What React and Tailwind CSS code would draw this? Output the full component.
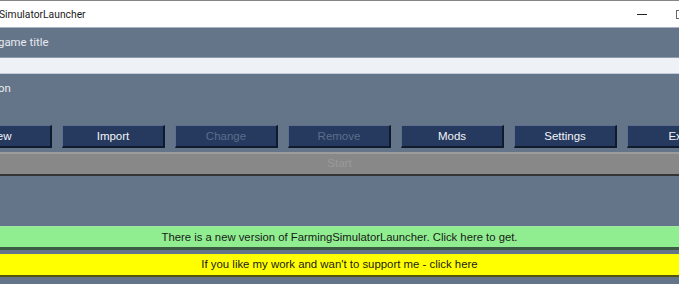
export default function App() {
  const buttons = [
    { label: "New", disabled: false },
    { label: "Import", disabled: false },
    { label: "Change", disabled: true },
    { label: "Remove", disabled: true },
    { label: "Mods", disabled: false },
    { label: "Settings", disabled: false },
    { label: "Exit", disabled: false },
  ];
  return (
    <div className="w-[679px] h-[284px] overflow-hidden bg-[#657589] flex flex-col" style={{ fontFamily: '"Liberation Sans", Arial, sans-serif' }}>
      <div className="h-px bg-[#858585] shrink-0" />
      <div className="h-[27px] shrink-0 bg-white border-b border-[#a7b3c3] flex items-center justify-between">
        <span className="-ml-px pt-px text-[10.3px] text-[#1b1b1b]" style={{ fontFamily: 'Roboto, "Noto Sans", sans-serif' }}>SimulatorLauncher</span>
        <div className="flex items-center h-full">
          <div className="w-[10px] h-px bg-[#222] mr-[29px]" />
          <div className="w-[3px] h-[9px] border-l border-t border-b border-[#666]" />
        </div>
      </div>
      <div className="h-[29px] shrink-0 flex items-center">
        <span className="-ml-[2px] text-[11.4px] text-[#e6eaf0]" style={{ fontFamily: 'Roboto, "Noto Sans", sans-serif' }}>game title</span>
      </div>
      <div className="h-[17px] shrink-0 bg-[#eef2f7] border-t border-[#8f9bab] border-b border-b-[#c3ccd8]" />
      <div className="h-[30px] shrink-0 flex items-center">
        <span className="-ml-[2px] text-[11.4px] text-[#e6eaf0]" style={{ fontFamily: 'Roboto, "Noto Sans", sans-serif' }}>on</span>
      </div>
      <div className="h-[21px] shrink-0" />
      <div className="h-[23px] shrink-0 flex gap-[10px] -ml-[51px]">
        {buttons.map((b) => (
          <div
            key={b.label}
            className={`w-[103px] shrink-0 h-full bg-[#263a5f] border border-[#5d6f8c] border-r-[#0f1a2c] border-b-[#0f1a2c] border-r-2 border-b-2 pt-px flex items-center justify-center text-[11.5px] ${b.disabled ? "text-[#5c6e8c]" : "text-[#f2f4f7]"}`}
          >
            {b.label}
          </div>
        ))}
      </div>
      <div className="h-[4px] shrink-0" />
      <div className="h-[24px] shrink-0 bg-[#888888] border-t-2 border-[#9c9c9c] border-b-2 border-b-[#353535] flex items-center justify-center text-[11.5px] text-[#9a9a9a]">
        Start
      </div>
      <div className="h-[50px] shrink-0" />
      <div className="h-[24px] shrink-0 bg-[#90ee90] border-t border-[#a4e7a4] border-b-[3px] border-b-[#3d5a43] flex items-center justify-center text-[11.3px] text-[#1a1a1a]">
        There is a new version of FarmingSimulatorLauncher. Click here to get.
      </div>
      <div className="h-[4px] shrink-0" />
      <div className="h-[23px] shrink-0 bg-[#ffff00] border-b-2 border-b-[#55550e] flex items-center justify-center text-[11.4px] text-[#1a1a1a]">
        If you like my work and wan't to support me - click here
      </div>
    </div>
  );
}
